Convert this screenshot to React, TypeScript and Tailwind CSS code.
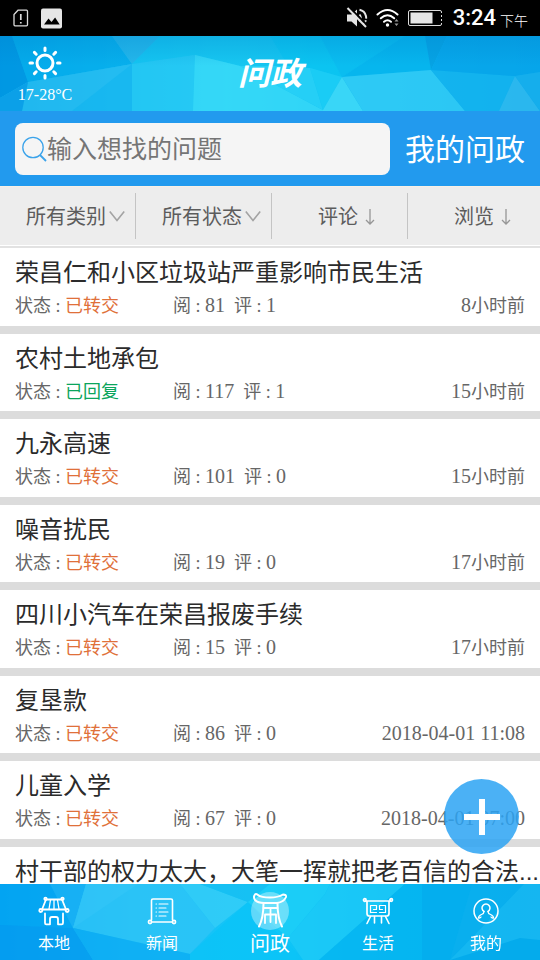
import { useState } from "react";
import type { ReactNode } from "react";
import clsx from "clsx";

type Question = {
  title: string;
  detail?: {
    status: "已转交" | "已回复";
    views: number;
    comments: number;
    time: string;
  };
};

const QUESTIONS: Question[] = [
  { title: "荣昌仁和小区垃圾站严重影响市民生活", detail: { status: "已转交", views: 81, comments: 1, time: "8小时前" } },
  { title: "农村土地承包", detail: { status: "已回复", views: 117, comments: 1, time: "15小时前" } },
  { title: "九永高速", detail: { status: "已转交", views: 101, comments: 0, time: "15小时前" } },
  { title: "噪音扰民", detail: { status: "已转交", views: 19, comments: 0, time: "17小时前" } },
  { title: "四川小汽车在荣昌报废手续", detail: { status: "已转交", views: 15, comments: 0, time: "17小时前" } },
  { title: "复垦款", detail: { status: "已转交", views: 86, comments: 0, time: "2018-04-01 11:08" } },
  { title: "儿童入学", detail: { status: "已转交", views: 67, comments: 0, time: "2018-04-01 07:00" } },
  { title: "村干部的权力太大，大笔一挥就把老百信的合法..." },
];

const SERIF = "font-['Liberation_Serif','Noto_Sans_CJK_SC',serif]";

const StatusBar = () => (
  <div className="flex h-9 shrink-0 items-center bg-black px-3 text-white">
    <svg width="18" height="22" viewBox="0 0 18 22" fill="none" stroke="#dcdcdc" strokeWidth="1.3">
      <path d="M6 3.2h8.5q1 0 1 1v13.6q0 1-1 1H3q-1 0-1-1V7.500z" />
      <path d="M8.800 7v6M8.800 15v1.600" strokeWidth="1.700" />
    </svg>
    <svg className="ml-[11px]" width="21" height="21" viewBox="0 0 21 21">
      <rect width="21" height="20" y="0.500" rx="2" fill="#e6e6e6" />
      <path d="M3 16.500l4.500-6 3 3.600 3.600-4.600 4.600 7z" fill="#000" />
    </svg>
    <div className="ml-auto flex items-center">
      <svg width="23" height="22" viewBox="0 0 23 22" fill="none" stroke="#e4e4e4">
        <path d="M1 7.500h4.500L11 2.500v17L5.500 14.500H1z" fill="#e4e4e4" stroke="none" />
        <path d="M13.500 7.500q2.600 3.500 0 7" strokeWidth="2" />
        <path d="M13.500 2.800a8.400 8.400 0 0 1 3.500 14.800" strokeWidth="2" strokeDasharray="12 1.500" />
        <path d="M3.500 0.500l18 18" stroke="#000" strokeWidth="2" />
        <path d="M1.500 1l18.500 19" strokeWidth="2" />
      </svg>
      <svg className="ml-[7px]" width="25" height="20" viewBox="0 0 25 20" fill="none" stroke="#fff" strokeWidth="2" strokeLinecap="round">
        <path d="M1.500 6.500q10-9 20 0" />
        <path d="M4.800 10.300q6.700-6 13.400 0" />
        <path d="M8 13.800q3.500-3 7 0" />
        <circle cx="11.500" cy="17" r="1.700" fill="#fff" stroke="none" />
        <path d="M20.500 11l2 2.600h-4zM20.500 18l2-2.600h-4z" fill="#999" stroke="none" />
      </svg>
      <svg className="ml-[7px]" width="35" height="18" viewBox="0 0 35 18" fill="none" stroke="#ddd">
        <rect x="0.500" y="1.500" width="33" height="15" rx="1.500" />
        <path d="M33.500 4v10" stroke="#000" strokeDasharray="2 2" />
        <rect x="2.500" y="3.500" width="22" height="11" fill="#e6e6e6" stroke="none" />
      </svg>
      <span className="ml-[10px] font-['Roboto',sans-serif] text-[22px] leading-none font-medium">3:24</span>
      <span className="mt-1 ml-1 font-['Noto_Sans_CJK_SC',sans-serif] text-sm leading-none font-light">下午</span>
    </div>
  </div>
);

const HeaderFacets = () => (
  <svg className="absolute inset-0 h-full w-full" viewBox="0 0 540 75" preserveAspectRatio="none" aria-hidden="true">
    <defs>
      <linearGradient id="head" x1="0" x2="1" y1="0" y2="0">
        <stop offset="0" stopColor="#03a0e8" />
        <stop offset="0.2" stopColor="#14b8f1" />
        <stop offset="0.42" stopColor="#28d0f6" />
        <stop offset="0.6" stopColor="#14c2f4" />
        <stop offset="1" stopColor="#0ba8ed" />
      </linearGradient>
      <linearGradient id="headShade" x1="0" x2="0" y1="0" y2="1">
        <stop offset="0" stopColor="#0080c8" stopOpacity="0.3" />
        <stop offset="0.4" stopColor="#0080c8" stopOpacity="0" />
      </linearGradient>
    </defs>
    <rect width="540" height="75" fill="url(#head)" />
    <g opacity="0.8">
      <path d="M0 0h12l16 46L0 62z" fill="#0096e2" />
      <path d="M12 0h100l20 28L28 46z" fill="#04adec" />
      <path d="M112 0h48l-28 28z" fill="#27b6ea" />
      <path d="M160 0h110l18 30-48 0-45-11-63 9z" fill="#14c6f1" />
      <path d="M28 46l104-18v47H0V62z" fill="#19b8f0" />
      <path d="M28 46l104-18-60 47H22z" fill="#30c0f2" opacity="0.6" />
      <path d="M0 62l28-16-6 29H0z" fill="#0da0e8" />
      <path d="M132 28l63-9-2 56h-61z" fill="#26c9f4" />
      <path d="M195 19l45 11 83 44v1H193z" fill="#38daf8" />
      <path d="M240 30h48l22 2 13 42z" fill="#29d2f7" />
      <path d="M270 0h50l22 41-32-9-22-2z" fill="#09c5f1" />
      <path d="M342 41L320 0h85z" fill="#08bdf0" />
      <path d="M342 41L405 0h20l6 34z" fill="#04b5ee" />
      <path d="M310 32l32 9-19 33z" fill="#1ccff6" />
      <path d="M342 41l-19 33v1h40z" fill="#43dcf8" />
      <path d="M342 41l89-7 34 41H363z" fill="#34cdf6" />
      <path d="M431 34l84 6-16 35h-34z" fill="#14b4ee" />
      <path d="M431 34l-6-34h22z" fill="#049fe2" />
      <path d="M431 34L447 0h93v36l-25 4z" fill="#06a5ea" />
      <path d="M515 40l-16 35h41z" fill="#32bbef" />
      <path d="M515 40l25-4v39z" fill="#18b0ec" />
    </g>
    <rect width="540" height="75" fill="url(#headShade)" />
  </svg>
);

const Header = () => (
  <header className="relative h-[75px] shrink-0 overflow-hidden text-white">
    <HeaderFacets />
    <div className="relative grid h-full grid-cols-[90px_1fr_90px] items-center">
      <div className="flex flex-col items-center">
        <svg width="36" height="36" viewBox="0 0 36 36" fill="none" stroke="#fff" strokeWidth="3" strokeLinecap="round">
          <circle cx="18" cy="18" r="8" />
          <path d="M18 3v2.500M18 30.500V33M3 18h2.500M30.500 18H33M7.400 7.400l1.800 1.800M26.800 26.800l1.800 1.800M7.400 28.600l1.800-1.800M26.800 9.200l1.800-1.800" />
        </svg>
        <span className={clsx(SERIF, "mt-1.5 text-base leading-none")}>17-28°C</span>
      </div>
      <h1 className="text-center text-[32px] leading-none font-bold italic">问政</h1>
    </div>
  </header>
);

const SearchBar = () => (
  <div className="flex h-[75px] shrink-0 items-center gap-[15px] bg-[#229aee] px-[15px]">
    <label className="flex h-[52px] min-w-0 flex-1 items-center rounded-lg bg-[#f5f5f5] pl-[7px]">
      <svg className="shrink-0" width="25" height="26" viewBox="0 0 25 26" fill="none" stroke="#3ba3ea" strokeWidth="1.300">
        <circle cx="11" cy="11.500" r="10.200" />
        <path d="M18 19l6 6" strokeWidth="1.800" />
      </svg>
      <input
        type="search"
        aria-label="输入想找的问题"
        placeholder="输入想找的问题"
        className="min-w-0 flex-1 bg-transparent pt-0.5 text-[25px] text-[#333333] outline-none placeholder:text-[#757575]"
      />
    </label>
    <a href="#mine" className="pt-0.5 text-3xl leading-none whitespace-nowrap text-white">
      我的问政
    </a>
  </div>
);

const FilterSelect = ({ label }: { label: string }) => (
  <div className="relative border-r border-[#c4c4c4]">
    <select aria-label={label} className="h-full w-full appearance-none bg-transparent pt-0.5 pl-[26px] text-xl text-[#5c5c5c] outline-none">
      <option>{label}</option>
    </select>
    <svg className="pointer-events-none absolute top-4 right-2.5" width="16" height="14" viewBox="0 0 16 14" fill="none" stroke="#a3a3a3" strokeWidth="1.600">
      <path d="M0.800 2.500L8 11.500l7.200-9" />
    </svg>
  </div>
);

const SortButton = ({ label, last }: { label: string; last?: boolean }) => (
  <button
    type="button"
    className={clsx("flex items-center gap-[7px] border-[#c4c4c4] pt-0.5 pl-[46px] text-xl text-[#5c5c5c]", !last && "border-r")}
  >
    {label}
    <svg width="10" height="16" viewBox="0 0 10 16" fill="none" stroke="#969696" strokeWidth="1.300">
      <path d="M5 0v15M1 11l4 4 4-4" />
    </svg>
  </button>
);

const Filters = () => (
  <div className="shrink-0 border-b-2 border-[#e2e2e2]">
    <div className="grid h-[60px] grid-cols-[136fr_136fr_136fr_132fr] border-t border-b border-t-[#f8f0e6] border-b-white bg-[#ededed] py-1.5">
      <FilterSelect label="所有类别" />
      <FilterSelect label="所有状态" />
      <SortButton label="评论" />
      <SortButton label="浏览" last />
    </div>
  </div>
);

const Num = ({ children }: { children: ReactNode }) => (
  <span className="text-xl leading-none">{children}</span>
);

const QuestionTime = ({ time }: { time: string }) => {
  const suffix = "小时前";
  if (!time.endsWith(suffix)) return <Num>{time}</Num>;
  return (
    <>
      <Num>{time.slice(0, -suffix.length)}</Num>
      {suffix}
    </>
  );
};

const QuestionRow = ({ title, detail }: Question) => (
  <li className="border-b-8 border-[#dcdcdc] bg-white px-[15px] pt-[7px] pb-2 last:border-b-0">
    <h2 className="text-2xl leading-normal whitespace-nowrap text-[#2b2b2b]">{title}</h2>
    {detail && (
      <div className={clsx(SERIF, "mt-1 flex text-lg leading-tight whitespace-nowrap text-[#666666]")}>
        <span className="w-[158px]">
          状态 :{" "}
          <span className={detail.status === "已回复" ? "text-[#0ba55c]" : "text-[#e0703a]"}>
            {detail.status}
          </span>
        </span>
        <span className="whitespace-pre">
          阅 : <Num>{detail.views}</Num>
          {"  "}评 : <Num>{detail.comments}</Num>
        </span>
        <span className="ml-auto">
          <QuestionTime time={detail.time} />
        </span>
      </div>
    )}
  </li>
);

const NavFacets = () => (
  <svg className="absolute inset-0 h-full w-full" viewBox="0 0 540 76" preserveAspectRatio="none" aria-hidden="true">
    <defs>
      <linearGradient id="nav" x1="0" x2="1" y1="0" y2="0">
        <stop offset="0" stopColor="#029ff0" />
        <stop offset="0.25" stopColor="#1cbcf6" />
        <stop offset="0.5" stopColor="#10c8f8" />
        <stop offset="0.75" stopColor="#04b2f0" />
        <stop offset="1" stopColor="#09adee" />
      </linearGradient>
    </defs>
    <rect width="540" height="76" fill="url(#nav)" />
    <g opacity="0.8">
      <path d="M0 0h50l23 44L0 41z" fill="#04a6f3" />
      <path d="M0 41l73 3 20 32H0z" fill="#059df0" />
      <path d="M50 0h36L73 44z" fill="#19b1f5" />
      <path d="M86 0h94l35 44-25 26L73 44z" fill="#2ec5f7" />
      <path d="M86 0h52L73 44z" fill="#36c8f8" />
      <path d="M180 0h20l48 18-33 26z" fill="#36cef8" />
      <path d="M73 44l117 26 4 6H93z" fill="#0daef4" />
      <path d="M200 0h70v18h-22z" fill="#18c0f3" />
      <path d="M248 18l55 58H190v-6z" fill="#0bc4f8" />
      <path d="M270 0h60l-5 10-37 44-40-36z" fill="#1fd0f8" />
      <path d="M325 10l-37 44 15 22h16l86-76h-75z" fill="#1ecbf8" />
      <path d="M405 0h17v76H319z" fill="#06b7f2" />
      <path d="M422 0h50l-22 76h-28z" fill="#04aeee" />
      <path d="M472 0h52l-74 76z" fill="#0aafee" />
      <path d="M524 0h16v76h-90z" fill="#18b9f2" />
      <path d="M450 76l70-22 20 2v20z" fill="#04abec" />
    </g>
  </svg>
);

const HouseIcon = () => (
  <svg width="32" height="30" viewBox="0 0 32 30" fill="none" stroke="#fff" strokeWidth="1.800" strokeLinecap="round" strokeLinejoin="round">
    <path d="M8 3.500h16M8 3.500L4 13.500h24L24 3.500" />
    <path d="M12.500 4l-1.500 9M16 4v9M19.500 4l1.500 9" strokeWidth="1.300" />
    <circle cx="7.500" cy="2.800" r="1.200" />
    <circle cx="24.500" cy="2.800" r="1.200" />
    <circle cx="2.800" cy="14.500" r="1.500" />
    <circle cx="29.200" cy="14.500" r="1.500" />
    <path d="M7 17.500v9.500q0 1.300 1.300 1.300H12v-5.300q0-2 2-2h4q2 0 2 2v5.300h3.700q1.300 0 1.300-1.300v-9.500" />
  </svg>
);

const ScrollIcon = () => (
  <svg width="30" height="30" viewBox="0 0 30 30" fill="none" stroke="#fff" strokeWidth="1.600" strokeLinecap="round" strokeLinejoin="round">
    <path d="M4.500 24V4.500Q4.500 3 6 3h18q1.500 0 1.500 1.500V24" />
    <path d="M4.500 26h21" />
    <circle cx="3" cy="26" r="1.600" />
    <circle cx="27" cy="26" r="1.600" />
    <path d="M9 8h.5M12 8h9M9 12h.5M12 12h7M9 16h.5M12 16h9M9 20h.5M12 20h7" strokeWidth="1.100" />
  </svg>
);

const TingIcon = () => (
  <svg width="38" height="40" viewBox="0 0 38 40" fill="none" stroke="#fff" strokeWidth="2" strokeLinecap="round" strokeLinejoin="round">
    <circle cx="19" cy="20" r="19" fill="#fff" fillOpacity="0.350" stroke="none" />
    <path d="M4 3.500Q2 6 4 9q3 3 9 3h13q7-1 9-6 .5-2.500-3-2.500Q27 6.500 19 6.500 10 6.500 7 4 5 2.500 4 3.500z" />
    <path d="M12.500 12.500Q12.500 27 8 35.500M26.500 12.500Q26.500 27 31 35.500" />
    <path d="M12.500 17h14M14 32v-8.500h11V32M19.500 17v14" strokeWidth="1.800" />
  </svg>
);

const VesselIcon = () => (
  <svg width="32" height="30" viewBox="0 0 32 30" fill="none" stroke="#fff" strokeWidth="1.700" strokeLinecap="round" strokeLinejoin="round">
    <path d="M3.500 5h25M5 6v11.500q0 2.500 2.500 2.500h17q2.500 0 2.500-2.500V6" />
    <circle cx="2.800" cy="4" r="1.300" />
    <circle cx="29.200" cy="4" r="1.300" />
    <path d="M14.500 16.500h-6V9.500h6v4h-3M17.500 16.500h6V9.500h-6v4h3" strokeWidth="1.200" />
    <path d="M8.500 20.500L5 27.500M12.500 20.500v6.500M19.500 20.500v6.500M23.500 20.500l3.500 7" strokeWidth="1.600" />
  </svg>
);

const PersonIcon = () => (
  <svg width="28" height="30" viewBox="0 0 28 30" fill="none" stroke="#fff" strokeWidth="1.500" strokeLinecap="round" strokeLinejoin="round">
    <circle cx="14" cy="15" r="12" />
    <path d="M12 15.500a4 4 0 1 1 4 0" />
    <path d="M12 15.500q0 2-2.500 3-3 1.300-3 3.500M16 15.500q0 2 2.500 3 3 1.300 3 3.500M6.500 22q1.500.5 2.500-1M21.500 22q-1.500.5-2.500-1" strokeWidth="1.300" />
  </svg>
);

const TABS = [
  { label: "本地", Icon: HouseIcon },
  { label: "新闻", Icon: ScrollIcon },
  { label: "问政", Icon: TingIcon },
  { label: "生活", Icon: VesselIcon },
  { label: "我的", Icon: PersonIcon },
];

const BottomNav = () => {
  const [active, setActive] = useState("问政");

  return (
    <nav className="relative h-[76px] shrink-0 overflow-hidden">
      <NavFacets />
      <div className="relative grid h-full grid-cols-5 text-white">
        {TABS.map(({ label, Icon }) => (
          <button
            key={label}
            type="button"
            onClick={() => setActive(label)}
            className="flex flex-col items-center"
          >
            <span className="flex h-[46px] items-center pt-2">
              <Icon />
            </span>
            <span className={clsx("flex h-7 items-center leading-none", label === active ? "text-xl" : "text-base")}>
              {label}
            </span>
          </button>
        ))}
      </div>
    </nav>
  );
};

export default function App() {
  return (
    <div className="flex h-screen flex-col bg-white font-['Liberation_Sans','Noto_Sans_CJK_SC',sans-serif]">
      <StatusBar />
      <Header />
      <SearchBar />
      <Filters />
      <main className="relative min-h-0 flex-1">
        <ul className="h-full overflow-x-hidden overflow-y-auto [scrollbar-width:none]">
          {QUESTIONS.map((q) => (
            <QuestionRow key={q.title} {...q} />
          ))}
        </ul>
        <button
          type="button"
          aria-label="我要提问"
          className="absolute right-[21px] bottom-[30px] flex size-[75px] items-center justify-center rounded-full bg-[#2ba3f3]/85"
        >
          <svg width="36" height="36" viewBox="0 0 36 36" stroke="#fff" strokeWidth="6">
            <path d="M18 0v36M0 18h36" />
          </svg>
        </button>
      </main>
      <BottomNav />
    </div>
  );
}
